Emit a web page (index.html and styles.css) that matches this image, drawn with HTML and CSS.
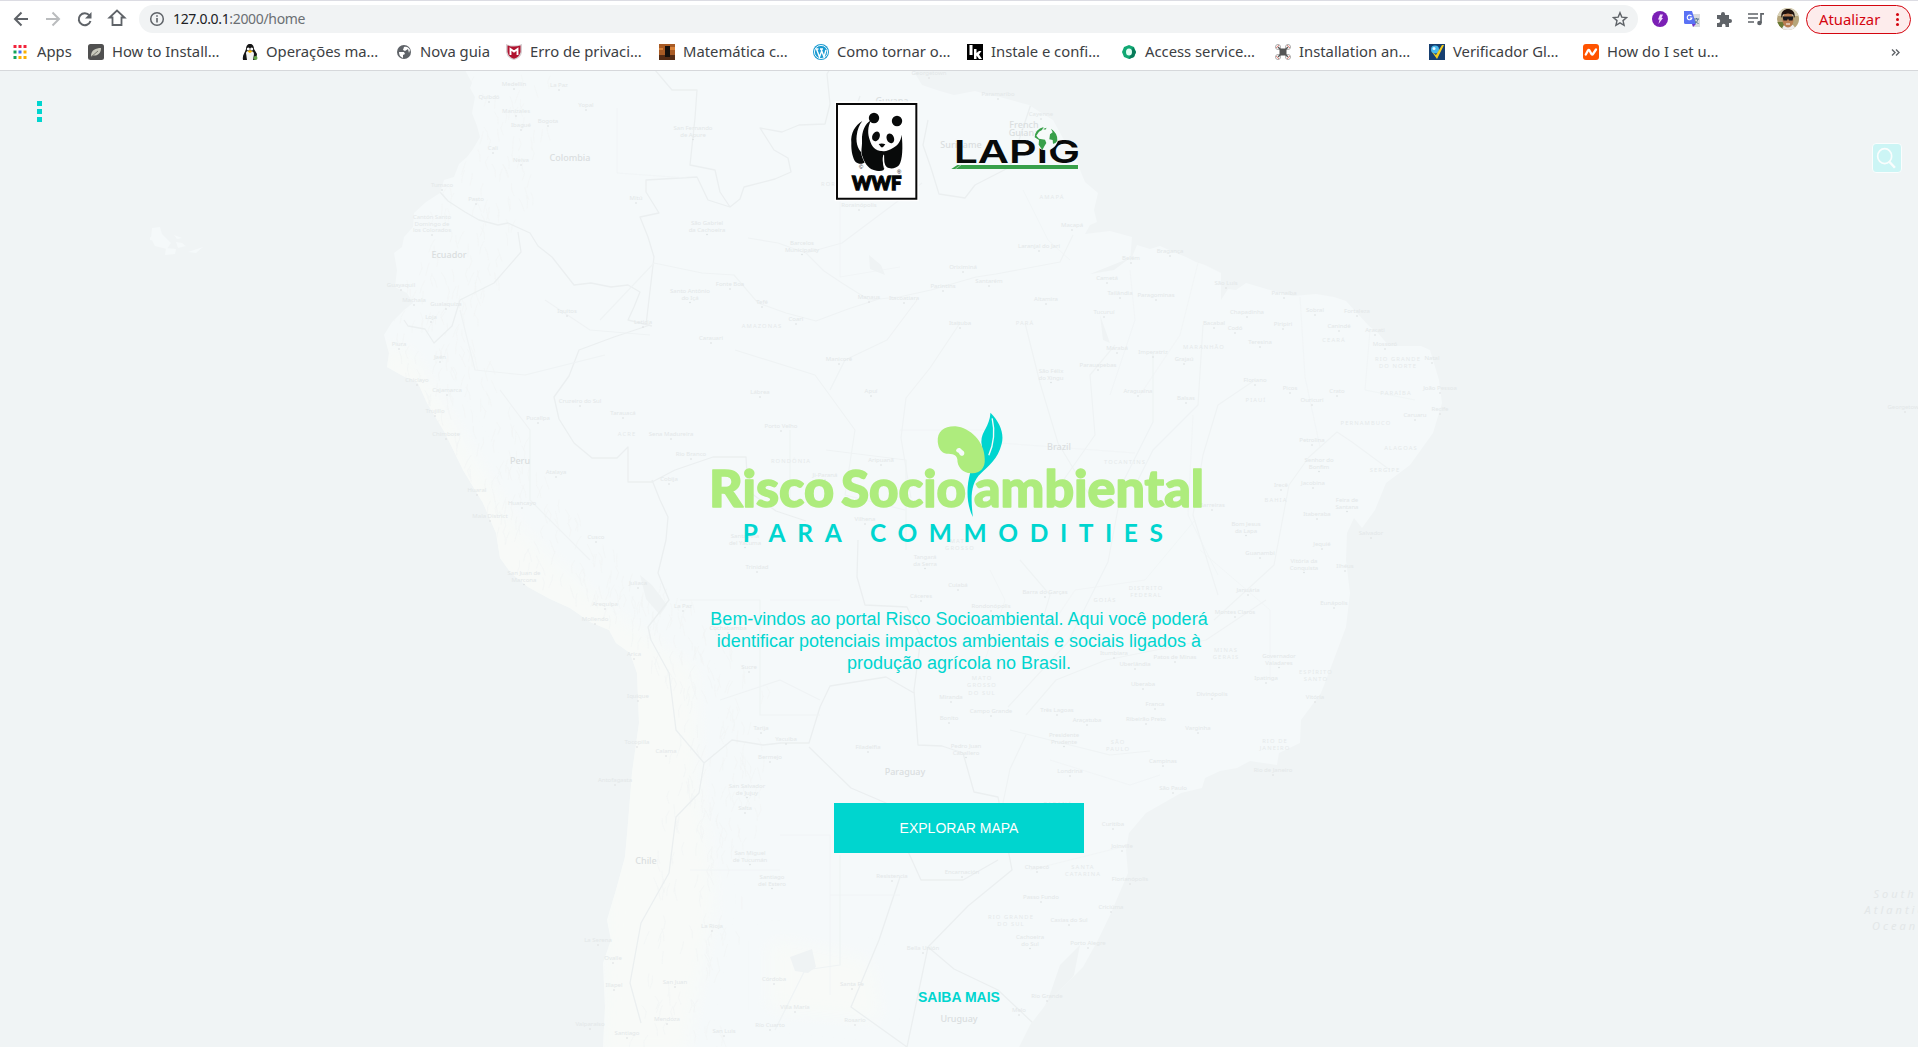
FILE: index.html
```html
<!DOCTYPE html>
<html lang="pt-BR">
<head>
<meta charset="utf-8">
<title>Risco Socioambiental</title>
<link rel="stylesheet" href="styles.css">
</head>
<body>
<header class="browser">
  <div class="toolbar">
    <svg class="nav" viewBox="0 0 128 28"><g fill="none" stroke="#5f6368" stroke-width="2"><path d="M28 14H16M21.500 7.500L15 14l6.500 6.500"/><path stroke="#babcbe" d="M46 14h12M52.500 7.500L59 14l-6.500 6.500"/><path d="M89.500 10.500A6 6 0 1 0 90.500 16"/><path d="M112.500 20V12.500h-3L117 5.500l7.500 7h-3V20z" stroke-width="1.800"/></g><path fill="#5f6368" d="M91.500 7v6.500H85z"/></svg>
    <div class="omnibox">
      <svg class="info" viewBox="0 0 16 16"><circle cx="8" cy="8" r="6.300" fill="none" stroke="#5f6368" stroke-width="1.500"/><path d="M8 7v4.500M8 4.200v1.600" stroke="#5f6368" stroke-width="1.600"/></svg>
      <span class="url"><b>127.0.0.1</b>:2000/home</span>
      <svg class="star" viewBox="0 0 16 16"><path d="M8 1.700l1.800 4.400 4.800.4-3.600 3.100 1.100 4.700L8 11.800l-4.100 2.500L5 9.600 1.400 6.500l4.800-.4z" fill="none" stroke="#5f6368" stroke-width="1.400"/></svg>
    </div>
    <div class="extensions">
      <svg viewBox="0 0 16 16"><circle cx="8" cy="8" r="8" fill="#7b1fb5"/><path d="M8 3.500h3L9.500 7H11l-4.500 6L7.500 8.500H6z" fill="#f3dcff"/></svg>
      <svg viewBox="0 0 16 16"><path d="M6 3h10v13H9z" fill="#dadcdf"/><path d="M0 0h8l4 13H1.500A1.500 1.500 0 0 1 0 11.500z" fill="#5a72f5"/><path d="M8 13h4l-3 3z" fill="#7335c9"/><path d="M7.500 5.200a2.300 2.300 0 1 0 .3 1.800H5.800" fill="none" stroke="#fff" stroke-width="1.200"/><path d="M10 8h5M12.500 7v1M14 8c-.5 2-1.500 3.500-3 4M11 9.500c1 1.800 2 2.500 3.500 3" fill="none" stroke="#52758a"/></svg>
      <svg viewBox="0 0 16 16"><path d="M1 4h4V3a2 2 0 0 1 4 0v1h4v4h1a2 2 0 0 1 0 4h-1v4H9.500v-1.500a1.800 1.800 0 0 0-3.600 0V16H1v-4h1.200a2 2 0 0 0 0-4H1z" fill="#5f6368"/></svg>
      <svg viewBox="0 0 16 16"><path d="M0 3h10M0 7h10M0 11h6M13 12V2.800h3" fill="none" stroke="#5f6368" stroke-width="1.700"/><circle cx="11.500" cy="12" r="2.300" fill="#5f6368"/></svg>
    </div>
    <svg class="avatar" viewBox="0 0 22 22"><defs><clipPath id="face"><circle cx="11" cy="11" r="11"/></clipPath></defs><g clip-path="url(#face)"><path fill="#b6a57a" d="M0 0h22v22H0z"/><path fill="#d9d2ba" d="M0 0h22v8H0z"/><path fill="#6a7a36" d="M0 14h7v8H0z"/><path fill="#eee" d="M4 22l3-5h9l4 5z"/><ellipse cx="11" cy="12" rx="5.500" ry="7.500" fill="#b97d52"/><path d="M4.500 10C2-2 20-2 17.500 10l-1.500-3.500-5-1-5 1z" fill="#21130e"/><path d="M5.500 8.500h11l-1 4h-3.500l-1-2-1 2H6.500z" fill="#17171c"/><path d="M9 16h4" stroke="#fff"/></g></svg>
    <div class="update"><span>Atualizar</span><i></i></div>
  </div>
  <nav class="bookmarks">
    <a class="apps"><svg viewBox="0 0 16 16"><g stroke-width="3" stroke-dasharray="3 2"><path d="M1.500 2.500h13" stroke="#f2233b"/><path d="M1.500 8h3" stroke="#12a35b"/><path d="M6.500 8h3" stroke="#3f6df5"/><path d="M11.500 8h3" stroke="#fbb000"/><path d="M1.500 13.500h3" stroke="#12a35b"/><path d="M6.500 13.500h8" stroke="#fbb000"/></g></svg><span>Apps</span></a>
    <a><svg viewBox="0 0 16 16"><rect width="16" height="16" rx="2.500" fill="#505050"/><path d="M3 12C3 6 8 4 13 4c0 6-4 8-8 7.500" fill="#c9c9bd"/><path d="M3 13l7-6" stroke="#77776e"/></svg><span>How to Install…</span></a>
    <a><svg viewBox="0 0 16 16"><path d="M4 5c0-7 8-7 8 0l3 5-1 6H1c-1-5 2-7 3-11z" fill="#151515"/><path d="M4 9c0-3 8-3 8 1l-1 6H5z" fill="#f3f3f3"/><circle cx="6.300" cy="5" r="1.500" fill="#fff"/><circle cx="9.700" cy="5" r="1.500" fill="#fff"/><path d="M5.500 7.500L8 6l2.500 1.500L8 9z" fill="#f2b200"/><circle cx="13.500" cy="14" r="2" fill="#62a348"/></svg><span>Operações ma…</span></a>
    <a><svg viewBox="0 0 16 16"><circle cx="8" cy="8" r="7" fill="#5f6368"/><path d="M3 8h5l1 2-2 1v3C4 13 3 11 3 8zM8 3l-1 3 2 1 3-2 1 4 1-3c-1-2-3-4-6-3z" fill="#fff"/></svg><span>Nova guia</span></a>
    <a><svg viewBox="0 0 16 16"><path d="M0 0q8 3 16 0v8q-1 6-8 8-7-2-8-8z" fill="#d5cdd0"/><path d="M1.500 1.500q6.500 2 13 0V8q-1 5-6.500 6.700Q2.500 13 1.500 8z" fill="#b0122f"/><path d="M4.500 11V5L8 7.500 11.500 5v6" fill="none" stroke="#fff" stroke-width="1.900"/></svg><span>Erro de privaci…</span></a>
    <a><svg viewBox="0 0 16 16"><path fill="#a85b25" d="M0 0h16v16H0z"/><path fill="#542b14" d="M0 11h16v5H0z"/><path fill="#d98238" d="M11 3h5v3h-5zM0 4h4v2H0z"/><path fill="#15100d" d="M6 2h5v11H6z"/></svg><span>Matemática c…</span></a>
    <a><svg viewBox="0 0 16 16"><circle cx="8" cy="8" r="8" fill="#1b9bd1"/><circle cx="8" cy="8" r="6.600" fill="none" stroke="#fff" stroke-width=".9"/><path d="M2.500 5h3M7 5h3M3.500 5l3 8 2-5.500M8 5l3 8 2-7" fill="none" stroke="#fff" stroke-width="1.400"/></svg><span>Como tornar o…</span></a>
    <a><svg viewBox="0 0 16 16"><path d="M0 0h16v16H0z"/><path d="M2.500 1h3v10h-3zM7 5h2.500v4L12 7h2.500L12 10.500l3 4.500h-3l-2.500-3.500V15H7z" fill="#fff"/></svg><span>Instale e confi…</span></a>
    <a><svg viewBox="0 0 16 16"><path d="M8 1l5 2 2 5-2 5-5 2-5-2-2-5 2-5z" fill="#11a873"/><path d="M12 3l3 5-2 5-5 2z" fill="#087b5a"/><ellipse cx="8" cy="8" rx="3" ry="3.500" fill="#e1fff4"/></svg><span>Access service…</span></a>
    <a><svg viewBox="0 0 16 16"><g fill="#fff" stroke="#aaa"><circle cx="3" cy="3" r="2.500"/><circle cx="13" cy="3" r="2.500"/><circle cx="3" cy="13" r="2.500"/><circle cx="13" cy="13" r="2.500"/></g><path d="M3 3l10 10M13 3L3 13" stroke="#555" stroke-width="1.400"/><path fill="#555" d="M4.500 4.500h7v7h-7z"/><path d="M1 4l3-3M12 1l3 3M1 12l3 3M12 15l3-3" stroke="#e58b83"/></svg><span>Installation an…</span></a>
    <a><svg viewBox="0 0 16 16"><path fill="#173f70" d="M0 0h16v16H0z"/><circle cx="6" cy="5.500" r="4" fill="#48b9ed"/><circle cx="5" cy="4.500" r="1.500" fill="#e9faff"/><path d="M3 8l4 3 6-10h2L8 15z" fill="#f5ce1e"/></svg><span>Verificador Gl…</span></a>
    <a><svg viewBox="0 0 16 16"><rect width="16" height="16" rx="3" fill="#ff5300"/><path d="M2.800 10.500L5 6.500q.8-1 1.500 0l2 3.500q.8 1 1.500 0L13 5.500" fill="none" stroke="#fff" stroke-width="2.300" stroke-linecap="round"/></svg><span>How do I set u…</span></a>
    <svg class="more" viewBox="0 0 9 7"><path d="M1 .5l3 3-3 3M5 .5l3 3-3 3" fill="none" stroke="#5f6368" stroke-width="1.400"/></svg>
  </nav>
</header>
<main class="home">
  <svg class="map" viewBox="0 71 1918 976" aria-hidden="true">
    <defs><clipPath id="land"><path id="coast" d="M465 70L472 83L470 88L475 97L472 113L477 126L480 137L473 149L467 157L459 164L454 177L444 180L440 193L426 202L414 213L413 227L404 237L402 247L394 253L397 270L395 287L407 293L413 303L404 310L392 322L384 335L389 353L387 367L403 376L418 383L427 403L445 433L463 470L483 503L496 533L500 558L511 573L528 587L550 599L570 608L590 622L609 630L616 643L630 653L637 673L639 723L632 773L628 823L625 857L616 890L607 920L611 940L603 963L605 1007L603 1047H1019L1030 1025L1044 1007L1062 988L1083 967L1098 940L1111 913L1128 873L1126 850L1129 833L1146 813L1181 793L1202 788L1205 778L1220 771L1237 768L1250 761L1277 765L1279 753L1300 743L1301 720L1321 693L1331 667L1346 627L1350 593L1346 560L1347 533L1354 518L1362 528L1375 510L1386 483L1410 465L1433 433L1442 403L1439 380L1430 350L1421 346L1389 346L1378 333L1369 326L1357 313L1346 301L1334 297L1316 294L1293 296L1270 290L1246 283L1236 290L1228 289L1221 300L1221 273L1205 265L1196 262L1186 257L1176 253L1160 246L1150 249L1137 245L1130 262L1132 237L1110 231L1085 234L1090 225L1097 222L1094 210L1098 193L1085 182L1078 165L1076 147L1064 140L1053 120L1040 112L1029 105L1000 97L989 95L975 91L954 95L940 91L922 85L913 70z"/></clipPath><filter id="soft"><feGaussianBlur stdDeviation="9"/></filter></defs>
    <use href="#coast" class="coast"/>
    <g clip-path="url(#land)">
      <path class="andes" filter="url(#soft)" d="M380 345l30 5 60 100 50 80 90 80 85 60 5 120 15 110-30 160-85 0 10-370-50-60-180-160zM770 940l100 20 10 60-110-10z"/>
      <g id="relief" class="relief"></g>
      <path class="water" d="M640 575l12 10 15 20-7 10-14-16zM869 255l12 10 4 10-15-6zM977 200l6 8M1100 315l10 28-7-3zM790 957l22-8 4 18-8 6-13-2zM1060 965l20-20-6 30-30 42-16 18 20-35zM1130 258l-16 12-24 4 20-8z"/>
      <g class="border">
        <path d="M440 192l8 9 17 11 14 8 19 5 10-2 22 10 8 13 14 11 22 28 17-2 20 4 17-2 12 7-6 15-6 13 16 4 8 2M518 232l3 20-27 31-34 17-8 26-18 17-9-14-17-3-4-6"/>
        <path d="M655 70l17 20 25 0-2 28-5 47 25 5 5 22 10 15 10-8 4-12 31-8 16-7-3-14-14-8-14-22 22 4 17-7 26-1 5-20-3-30 10-17M730 207l-22-7-11-23-51 3v12l13 21-19 4 8 20 6 20-8 68"/>
        <path d="M650 325l-36 12-35 13-10 26-15 21 5 22 15 24 18 15h25l11-11v35h24l23-12 38-13h33l2 34 28 20 30 10M652 480l8 20 8 17-2 23-8 33 11 27-21 27 3 13 18 33 7 57 28 33-5 30-23 24-7 56-28 50-11 60 11 40"/>
        <path d="M858 540l-1 37 8 28 42 2 14 30-7 53 4 55 24 1 21 7 11 39 24 5 14 73-44 36-40 41 26 22 44 21 35 33M704 763l28-23 31 5 18-2h28l11-36 10-21 56-9 28 16M809 747l42 41 35 15 35 77 42 0 35-20M900 877l-21 63-28 67 56 40M928 947l-21 100M860 96l-10 30-10 12M928 120l-5 25 8 23 8 26 26 4 10-13 35-18 10-30 11-33"/>
      </g>
      <g class="river">
        <path d="M748 238l30 5 28 10 18 18 18 12 27 17 30-3 32-7 45-13 20-3 64-12 13-27M600 320l54-57 48 10 32 2 24 28 28 10 30 8 32-12 31-10M806 253l36-10 80-60M830 390l15-30 42-20 30-40"/>
        <path d="M960 323l-30 45-24 30-5 40 10 60M1025 323l15 60 18 60 30 50M1115 345l-25 30 5 60-35 50M1153 352v70l-30 60-15 80-40 80-60 65M1255 380l-37 25-15 50-10 60 25 80M1390 470l-38-28-15-10-28 25-20 28-15 80-60 55M1026 715l30-35 50-20 100-20 60-40M1010 730l40 10 60 15 40-4M1026 735l-16 34-12 58"/>
        <path d="M545 300l45 30 60 5M460 310l15 60 50 5 80-20M500 390l30 40v70l60 60M735 350l80 25 40 55-10 65 60 15M790 430v70M826 450l80 10v90M720 700l60-20 40 20M680 600h80v115h60M775 1030l30-60 35-5v-110M1138 480l15-30 45-45 5-80M1020 560l30 35-15 50"/>
      </g>
      <g class="region"><path d="M617 108v65l70 5M840 137v140l60-10M880 180l30-10v-40M1023 190l25 50 22 20M1130 270l5 50-25 75M1200 255l-20 80-40 60M1300 297l5 80 15 70M1370 330l-5 60 50 10M1193 415l-5 100 30 60M1000 443l135 10M900 430h85v20M1035 650l40-60 70-10 50-60M1200 550l70 60v70M990 570l15 30-20 60M1050 760l80 25 30-10M1030 870l100-25M770 600h70M780 835h50v160M690 870h90M830 895h70"/></g>
    </g>
    <path class="coast" d="M152 228l8-1 2 7 9 9-4 6-12-3-4-8zM150 237l5 1v3l-5-1zM166 248l10 1-1 5-10 1zM174 235l8 3-5 1zM176 242l6 1 4 3-8 2zM188 252l15-5-7 6z"/>
    <g id="labels"></g>
  </svg>
  <button class="menu" aria-label="Menu"><i></i><i></i><i></i></button>
  <button class="search" aria-label="Buscar"><svg viewBox="0 0 30 30"><ellipse cx="12.500" cy="13" rx="7.500" ry="8"/><path d="M17.500 19l6 6.500" stroke-width="2.600"/></svg></button>
  <div class="content">
    <svg class="partners" viewBox="0 0 834 360">
      <path fill="#fff" d="M44 34h252v300H44z"/><path fill="#fff" stroke="#080808" stroke-width="6" d="M51 42h238v284H51z"/>
      <g fill="#080a0a">
        <path d="M127 93C106 105 91 130 94 158c-1 27 5 48 13 58 10 8 22 6 30-1 2-9-1-17-6-23-15-9-24-30-21-55 2-19 8-32 17-44z"/>
        <path stroke="#fff" stroke-width="3" paint-order="stroke" d="M153 91c-18 10-28 34-27 60 1 22-5 32 2 50 8 23 20 38 41 41 17 3 24-1 24-8-5-17-7-29-2-41 3 15-1 29 10 39 9 6 28 4 36-6 11-17 12-56 8-92-3 21-12 32-25 39-14 8-24 13-34 10-20 0-31-14-36-31-8-20-7-41 3-61z"/>
        <circle cx="162" cy="84" r="15.500"/><circle cx="231" cy="93" r="15.500"/>
        <ellipse cx="168" cy="139" rx="11" ry="15" transform="rotate(25 168 139)"/><ellipse cx="211" cy="145" rx="11" ry="15" transform="rotate(-22 211 145)"/>
        <path d="M176 162q10-4 20 1l-6 7q-5 5-9-1z"/>
      </g>
      <path d="M191 196q-2 22 2 39M176 178q7 4 13 3 6 1 12-3" stroke="#fff" stroke-width="3" fill="none"/>
      <text class="mark" x="117" y="238">©</text><text class="mark" x="231" y="253">®</text>
      <text class="wwf" x="96" y="299" textLength="148" lengthAdjust="spacingAndGlyphs">WWF</text>
      <text class="lapig" x="401" y="220" textLength="379" lengthAdjust="spacingAndGlyphs">LAPiG</text>
      <circle cx="678" cy="145" r="36" fill="#f6fafa"/>
      <g fill="#38a04a"><path d="M671 111l-5 9-9 5-8 12 8 9 18 3 4 10-5 8-7 13-11-16 1-14-13-8q1-24 27-31zM693 116q21 14 19 36-6 10-13 9l-1-11-10-2 2-15 8-6zM680 113l-4 6-7-2z"/><path d="M412 225h362v12H394z"/></g>
      <path d="M424 224l-18 13" stroke="#cfe8d4" stroke-width="2"/>
    </svg>
    <svg class="brand" viewBox="0 0 538 160">
      <text class="risco" x="19" y="106.500" textLength="125" lengthAdjust="spacingAndGlyphs">Risco</text>
      <text class="risco" x="151" y="106.500" textLength="125" lengthAdjust="spacingAndGlyphs">Socio</text>
      <text class="risco" x="284" y="106.500" textLength="230" lengthAdjust="spacingAndGlyphs">ambiental</text>
      <g transform="scale(.338 .3333)">
        <path fill="#00d5cf" d="M889 38C918 68 930 101 922 132C911 178 883 197 861 220C828 250 831 300 837 351C819 317 816 265 829 218L870 190L862 127C861 94 886 82 889 38z"/>
        <path d="M894 55q13 58-10 111" fill="none" stroke="#f5fafa" stroke-width="4"/>
        <path fill="#aeec7d" d="M733 126C731 94 751 78 786 79C828 83 872 125 872 177C874 203 859 220 835 220C808 222 790 200 791 178C789 164 777 161 759 161C743 159 735 145 733 126z"/>
        <path fill="#f5fafa" d="M787 153C788 143 799 141 804 149C817 156 812 169 802 167C797 166 797 158 791 157z"/>
      </g>
      <text class="para" x="52.700" y="141.700" textLength="99" lengthAdjust="spacing">PARA</text>
      <text class="para" x="180" y="141.700" textLength="293" lengthAdjust="spacing">COMMODITIES</text>
    </svg>
    <p class="welcome">Bem-vindos ao portal Risco Socioambiental. Aqui você poderá<br>identificar potenciais impactos ambientais e sociais ligados à<br>produção agrícola no Brasil.</p>
    <a class="explore">EXPLORAR MAPA</a>
    <a class="learn">SAIBA MAIS</a>
  </div>
</main>
<script src="map.js"></script>
</body>
</html>
```
FILE: styles.css
```css
* { box-sizing: border-box; }
body { margin: 0; width: 1918px; height: 1047px; overflow: hidden; display: flex; flex-direction: column; font-family: "Liberation Sans", sans-serif; }
.browser { height: 71px; background: #fff; border-top: 1px solid #dcdce3; border-bottom: 1px solid #d6d8db; font-family: "Noto Sans", sans-serif; color: #3c4043; }
.toolbar { height: 36px; padding: 4px 7px 0 0; display: flex; align-items: flex-start; }
.nav { width: 128px; height: 28px; margin-right: 11px; }
.omnibox { width: 1499px; height: 28px; background: #f1f3f4; border-radius: 14px; display: flex; align-items: center; padding: 0 10px; font-size: 14px; }
.info { width: 16px; height: 16px; }
.url { margin: -1px 0 0 8px; color: #6b6f73; letter-spacing: -.33px; flex: 1; }
.url b { font-weight: 400; color: #202124; }
.star { width: 16px; height: 16px; }
.extensions { display: flex; gap: 16px; margin: 6px 0 0 14px; }
.extensions svg { width: 16px; height: 16px; }
.avatar { width: 22px; height: 22px; margin: 3px 7px 0 13px; }
.update { width: 105px; height: 29px; border: 1.5px solid #d4050f; border-radius: 15px; background: #fdecec; color: #d4050f; display: flex; align-items: center; justify-content: space-between; padding: 0 12px 1px; font-size: 14.800px; }
.update i { width: 3px; height: 3px; border-radius: 50%; background: #d4050f; box-shadow: 0 -5px #d4050f, 0 5px #d4050f; margin-right: -1px; }
.bookmarks { height: 30px; padding-left: 12px; display: grid; grid-template-columns: 76px 154px 154px 110px 153px 154px 154px 154px 154px 154px 154px 154px 162px; align-items: center; }
.bookmarks a { display: flex; align-items: center; gap: 8px; font-size: 14.800px; line-height: 20px; white-space: nowrap; }
.bookmarks a span { margin-top: -2px; }
.bookmarks .apps { gap: 9px; }
.bookmarks a svg { width: 16px; height: 16px; flex: none; }
.more { width: 9px; height: 7px; justify-self: end; margin-right: -1px; }
.home { position: relative; height: 976px; background: #f0f4f5; }
.map { position: absolute; inset: 0; width: 1918px; height: 976px; }
.coast { fill: #f5f9fa; }
.andes { fill: #f8faf8; }
.water { fill: #eff3f4; }
.border, .river, .region, .relief { fill: none; stroke-linejoin: round; }
.border { stroke: #ebeff0; stroke-width: 1.300; }
.river { stroke: #eff3f4; stroke-width: 1.200; }
.region { stroke: #f0f4f5; stroke-width: .8; }
.relief { stroke: #f2f5f5; stroke-width: .7; }
.city, .state, .country, .sea { font-family: "Noto Sans", sans-serif; text-anchor: middle; fill: #e3e7e8; font-size: 6px; }
.state { font-size: 5.800px; letter-spacing: 1.100px; fill: #e5e9ea; }
.country { font-size: 9px; font-weight: 500; fill: #dadedf; }
.sea { font-size: 11px; font-style: italic; letter-spacing: 3px; }
.dot { fill: #dadedf; }
.menu, .search { position: absolute; border: 0; padding: 0; }
.menu { left: 37px; top: 30px; width: 5px; display: flex; flex-direction: column; gap: 3px; background: none; }
.menu i { width: 5px; height: 5px; background: #00d5cf; }
.search { left: 1872px; top: 72px; width: 30px; height: 30px; background: #ccf5f5; border: 1px solid #fafdfd; border-radius: 4px; }
.search svg { display: block; width: 28px; height: 28px; fill: none; stroke: #fafdfd; stroke-width: 1.800; }
.content { position: relative; height: 100%; padding-top: 19px; display: flex; flex-direction: column; align-items: center; }
.content > * { flex: none; }
.partners { width: 278px; height: 120px; }
.wwf { font: 900 56px Lato, sans-serif; stroke: #080a0a; stroke-width: 4px; }
.mark { font: 17px "Liberation Sans", sans-serif; }
.lapig { font: 600 95px Inter, sans-serif; fill: #080a0a; }
.brand { width: 538px; height: 160px; margin-top: 190px; }
.risco { font: 900 51.500px Lato, sans-serif; fill: #aeec7d; stroke: #aeec7d; stroke-width: 1.500px; stroke-linejoin: round; }
.para { font: 700 24.500px Lato, sans-serif; fill: #00d5cf; }
.welcome { margin: 48px 0 0; color: #00d5cf; font-size: 18px; line-height: 22px; text-align: center; white-space: nowrap; }
.explore { width: 250px; height: 50px; margin-top: 129px; background: #00d5cf; color: #fff; font-size: 14px; display: flex; align-items: center; justify-content: center; }
.learn { margin-top: 136px; font-size: 14px; line-height: 16px; font-weight: bold; color: #00d5cf; }
```
FILE: map.js
```js
const SVG = 'http://www.w3.org/2000/svg';
const labels = document.getElementById('labels');

// Each entry is "name,x,y"; a slash in the name starts a new line.
const cities = 'Medellín,514,84;La Paz,559,85;Quibdó,489,97;Yopal,586,105;Manizales,516,111;Ibagué,521,125;Bogota,548,121;Cali,493,148;Neiva,521,160;Tumaco,442,185;Pasto,476,199;Mitú,636,198;San Fernando/de Apure,693,128;Cantón Santo/Domingo de/los Colorados,432,217;São Gabriel/da Cachoeira,707,223;Barcelos/Municipality,802,243;Guayaquil,401,285;Machala,414,300;Gualaquiza,446,304;Loja,431,317;Iquitos,567,311;Leticia,643,322;Santo Antônio/do Içá,690,291;Fonte Boa,730,284;Tefé,762,302;Manaus,869,297;Itacoatiara,904,298;Parintins,943,286;Santarém,989,281;Oriximiná,963,267;Coari,796,319;Carauari,711,338;Itaituba,960,323;Piura,399,344;Jaén,440,357;Manicoré,839,359;Chiclayo,417,380;Cajamarca,447,390;Lábrea,760,392;Apuí,871,391;Cruzeiro do Sul,580,401;Trujillo,435,411;Tarauacá,623,413;Pucallpa,538,418;Porto Velho,781,426;Chimbote,446,434;Sena Madureira,671,434;Rio Branco,691,454;Aripuanã,881,460;Atalaya,556,472;Ji-Paraná,825,475;Cobija,669,479;Huaral,477,490;Huancayo,522,503;Mala District,490,516;Cusco,596,537;Vilhena,865,519;Santa Ana/del Yacuma,745,536;Georgetown,929,73;Paramaribo,998,94;Cayenne,1041,114;Rorainópolis,859,205;Laranjal do Jari,1039,246;Macapá,1072,225;Belém,1131,258;Bragança,1170,251;Cametá,1107,278;São Luís,1226,283;Altamira,1046,299;Tailândia,1120,293;Paragominas,1156,295;Tucuruí,1104,312;Parnaíba,1284,293;Chapadinha,1247,312;Sobral,1315,310;Fortaleza,1357,311;Bacabal,1214,323;Codó,1235,328;Piripiri,1283,324;Canindé,1339,326;Aracati,1375,330;Teresina,1260,342;Mossoró,1385,344;Marabá,1117,348;Imperatriz,1153,352;Grajaú,1184,359;Natal,1432,358;Parauapebas,1098,365;São Félix/do Xingu,1051,371;Araguaína,1138,391;Floriano,1255,380;Picos,1290,388;Crato,1337,391;João Pessoa,1440,388;Balsas,1186,398;Ouricuri,1312,400;Recife,1440,409;Caruaru,1415,415;Petrolina,1312,440;Senhor do/Bonfim,1319,460;Irecê,1281,485;Jacobina,1313,483;Feira de/Santana,1347,500;Barreiras,1212,505;Itaberaba,1317,514;Bom Jesus/da Lapa,1246,524;Salvador,1371,533;Jequié,1322,544;Guanambi,1260,553;Vitória da/Conquista,1304,561;Ilhéus,1345,566;Georgetown,1905,407;San Juan de/Marcona,524,573;Juliaca,638,583;Trinidad,757,567;Arequipa,605,604;La Paz,683,606;Mollendo,595,619;Tangará/da Serra,925,557;Cuiabá,958,585;Cáceres,921,596;Barra do Garças,1045,592;Rondonópolis,991,606;Januária,1248,590;Montes Claros,1235,612;Eunápolis,1334,603;Cochabamba,728,628;Arica,634,654;Sucre,749,667;Iquique,638,696;Itumbiara,1114,653;Patos de Minas,1175,657;Uberlândia,1135,664;Governador/Valadares,1279,656;Uberaba,1143,684;Ipatinga,1266,678;Divinópolis,1212,694;Vitória,1315,697;Miranda,951,697;Campo Grande,991,711;Três Lagoas,1057,710;Araçatuba,1087,720;Bonito,949,718;Franca,1155,704;Ribeirão Preto,1146,719;Varginha,1198,728;Presidente/Prudente,1064,735;Tarija,761,728;Yacuiba,786,739;Calama,666,751;Tocopilla,637,742;Bermejo,770,757;Filadelfia,868,747;Pedro Juan/Caballero,966,746;Campinas,1163,761;Rio de Janeiro,1273,770;Londrina,1070,771;São Paulo,1173,788;Antofagasta,615,780;San Salvador/de Jujuy,747,786;Salta,745,808;Curitiba,1113,824;Joinville,1122,846;San Miguel/de Tucumán,750,853;Chapecó,1037,867;Santiago/del Estero,772,877;Resistencia,892,876;Encarnación,962,872;Florianópolis,1130,879;Passo Fundo,1041,897;Criciúma,1111,907;Caxias do Sul,1069,920;La Rioja,712,926;Cachoeira/do Sul,1030,937;Porto Alegre,1088,943;Bella Unión,923,948;La Serena,598,940;Ovalle,613,958;Illapel,614,985;San Juan,675,982;Córdoba,774,979;Santa Fe,852,984;Rio Grande,1047,996;Mendoza,667,1019;Villa María,795,1007;Rosario,855,1020;Melo,1019,1010;Valparaíso,590,1024;Río Cuarto,770,1025;San Luis,724,1031;Santiago,627,1033';
const states = 'AMAZONAS,762,326;PARÁ,1025,323;ACRE,627,434;RONDÔNIA,791,461;RORAIMA,838,184;AMAPÁ,1052,197;CEARÁ,1334,340;MARANHÃO,1204,347;RIO GRANDE/DO NORTE,1398,359;PARAÍBA,1396,393;PIAUÍ,1256,400;PERNAMBUCO,1366,423;ALAGOAS,1401,448;TOCANTINS,1125,462;SERGIPE,1385,470;BAHIA,1276,500;MATO/GROSSO,960,541;GOIÁS,1105,600;DISTRITO/FEDERAL,1146,588;MINAS/GERAIS,1226,650;ESPÍRITO/SANTO,1316,672;MATO/GROSSO/DO SUL,982,678;SÃO/PAULO,1118,742;RIO DE/JANEIRO,1275,741;PARANÁ,1058,804;SANTA/CATARINA,1083,867;RIO GRANDE/DO SUL,1011,917';
const countries = 'Colombia,570,158;Ecuador,449,255;Peru,520,461;Guyana,892,101;French/Guiana,1024,125;Suriname,961,145;Brazil,1059,447;Paraguay,905,772;Chile,646,861;Uruguay,959,1019';
const seas = 'South/Atlantic/Ocean,1895,894';

function place(list, kind, leading, drop) {
  for (const entry of list.split(';')) {
    const [name, x, y] = entry.split(',');
    const lines = name.split('/');
    lines.forEach((line, i) => {
      const t = document.createElementNS(SVG, 'text');
      t.setAttribute('class', kind);
      t.setAttribute('x', x);
      t.setAttribute('y', +y + drop + i * leading);
      t.textContent = line;
      labels.append(t);
    });
    if (kind === 'city') {
      const dot = document.createElementNS(SVG, 'circle');
      dot.setAttribute('class', 'dot');
      dot.setAttribute('cx', x);
      dot.setAttribute('cy', +y + 5 + (lines.length - 1) * leading);
      dot.setAttribute('r', .8);
      labels.append(dot);
    }
  }
}
place(states, 'state', 7.3, 2);
place(cities, 'city', 6.5, 2);
place(countries, 'country', 8.3, 3);
place(seas, 'sea', 16, 4);

// Short strokes along the Andes suggest the relief shading.
const spine = [[510, 80], [480, 200], [440, 300], [450, 390], [500, 470], [570, 560], [670, 620], [725, 700], [715, 790], [700, 880], [675, 1040]];
let seed = 7;
const random = () => (seed = (seed * 16807) % 2147483647) / 2147483647 - .5;
let d = '';
for (let i = 0; i < spine.length - 1; i++) {
  for (let n = 0; n < 60; n++) {
    const k = random() + .5;
    const x = spine[i][0] + (spine[i + 1][0] - spine[i][0]) * k + random() * 95;
    const y = spine[i][1] + (spine[i + 1][1] - spine[i][1]) * k + random() * 20;
    d += `M${x.toFixed(1)} ${y.toFixed(1)}l${(random() * 8).toFixed(1)} 6 ${(random() * 6).toFixed(1)} 7`;
  }
}
const relief = document.createElementNS(SVG, 'path');
relief.setAttribute('d', d);
document.getElementById('relief').append(relief);
```
